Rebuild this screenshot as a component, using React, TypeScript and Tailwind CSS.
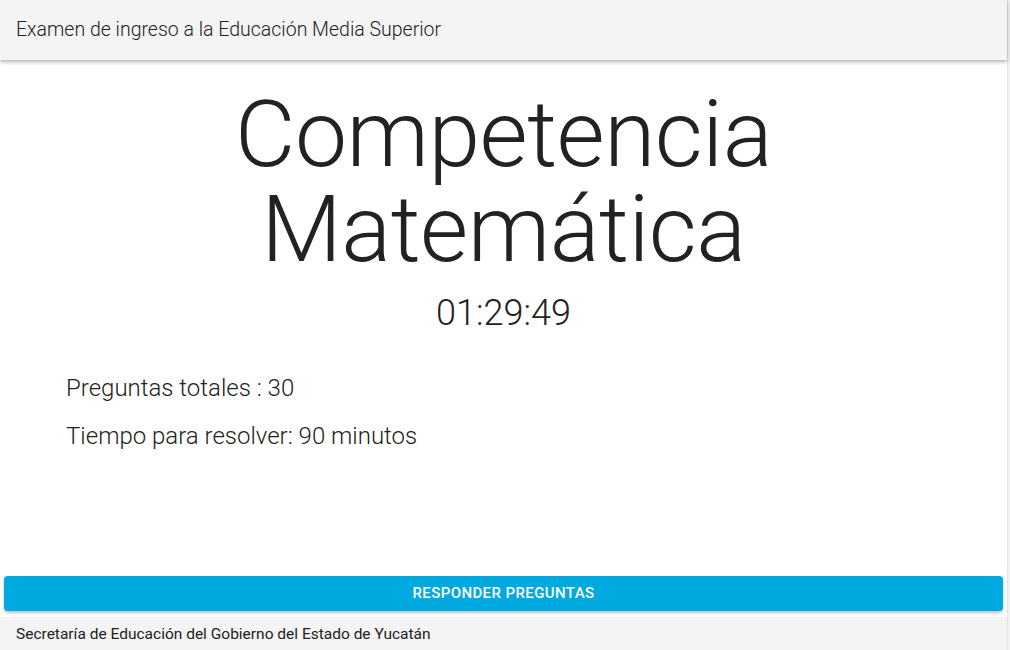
export default function App() {
  return (
    <div
      className="flex h-[650px] w-[1010px] overflow-hidden bg-white text-[#222]"
      style={{ fontFamily: "Roboto, 'Liberation Sans', sans-serif" }}
    >
      <div className="flex w-[1007px] flex-col">
        {/* Header */}
        <header className="z-10 flex h-[60px] shrink-0 items-center bg-[#f4f4f4] px-4 shadow-[0_2px_4px_rgba(0,0,0,0.3)]">
          <h1 className="text-[19.5px] font-light text-[#222]">Examen de ingreso a la Educación Media Superior</h1>
        </header>

        {/* Body */}
        <main className="flex flex-1 flex-col">
          <div className="mt-[27px] text-center">
            <h2 className="text-[93px] font-light leading-[95px] tracking-[-0.5px]">
              Competencia
              <br />
              Matemática
            </h2>
            <p className="mt-[16px] text-[36px] font-light leading-[40px]">01:29:49</p>
          </div>

          <div className="mt-[41px] flex flex-col gap-[20px] pl-[66px] text-[24px] font-light leading-[28px]">
            <p>Preguntas totales : 30</p>
            <p>Tiempo para resolver: 90 minutos</p>
          </div>
        </main>

        {/* Action */}
        <div className="px-[4px] pb-[6px]">
          <button className="flex h-[35px] w-full items-center justify-center rounded-[4px] bg-[#00a9e0] text-[15px] font-medium tracking-[0.4px] text-white shadow-[0_2px_3px_rgba(0,0,0,0.25)]">
            RESPONDER PREGUNTAS
          </button>
        </div>

        {/* Footer */}
        <footer className="flex h-[33px] shrink-0 items-center bg-[#f4f4f4] px-4 pt-[3px]">
          <p className="text-[15.5px] text-[#222]">Secretaría de Educación del Gobierno del Estado de Yucatán</p>
        </footer>
      </div>
      <div className="w-[3px] border-l border-[#e4e4e4] bg-[#f1f1f1]" />
    </div>
  );
}
